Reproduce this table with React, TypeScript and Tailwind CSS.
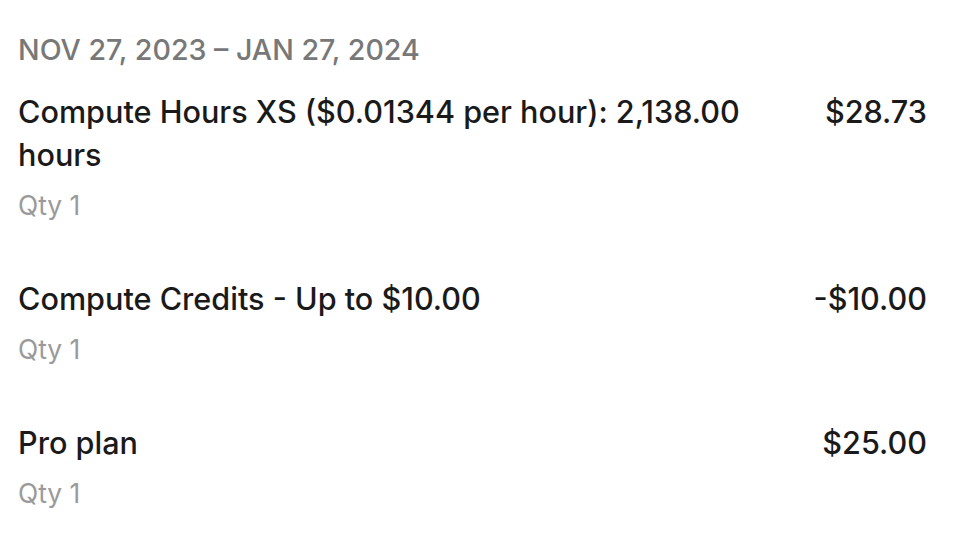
const items = [
  { name: "Compute Hours XS ($0.01344 per hour): 2,138.00 hours", qty: 1, amount: "$28.73" },
  { name: "Compute Credits - Up to $10.00", qty: 1, amount: "-$10.00" },
  { name: "Pro plan", qty: 1, amount: "$25.00" },
]

export default function App() {
  return (
    <div className="min-h-screen bg-white pl-[18px] pr-[33px] pt-[35px] font-['Inter',sans-serif]">
      <div className="text-[28.6px] font-medium leading-[30px] text-[#787878]">NOV 27, 2023 – JAN 27, 2024</div>
      <div className="mt-[25px] flex flex-col gap-[57px]">
        {items.map((item) => (
          <div key={item.name} className="flex items-start justify-between gap-10">
            <div className="flex-1">
              <div className="text-[30.6px] font-medium leading-[43px] text-[#1a1a1a]">{item.name}</div>
              <div className="mt-[14px] text-[26.4px] leading-[30px] text-[#9a9a9a]">Qty {item.qty}</div>
            </div>
            <div className="text-[30.6px] font-medium leading-[43px] text-[#1a1a1a]">{item.amount}</div>
          </div>
        ))}
      </div>
    </div>
  )
}
